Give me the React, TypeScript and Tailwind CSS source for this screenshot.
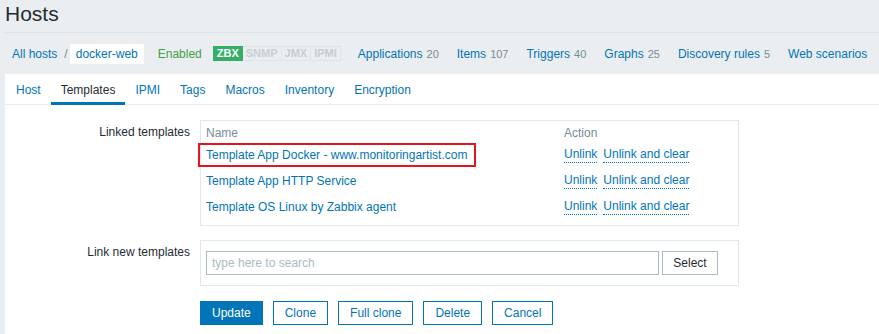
import React from "react";

const navLinks = [
  { label: "Applications", count: "20" },
  { label: "Items", count: "107" },
  { label: "Triggers", count: "40" },
  { label: "Graphs", count: "25" },
  { label: "Discovery rules", count: "5" },
  { label: "Web scenarios", count: "" },
];

const tabs = ["Host", "Templates", "IPMI", "Tags", "Macros", "Inventory", "Encryption"];

const linked = [
  "Template App Docker - www.monitoringartist.com",
  "Template App HTTP Service",
  "Template OS Linux by Zabbix agent",
];

function ActionLinks() {
  return (
    <div className="flex gap-[6px]">
      <span className="border-b border-dotted border-[#0275b8] leading-[15px] text-[#0275b8]">Unlink</span>
      <span className="border-b border-dotted border-[#0275b8] leading-[15px] text-[#0275b8]">Unlink and clear</span>
    </div>
  );
}

export default function App() {
  return (
    <div
      className="h-[334px] w-[879px] overflow-hidden bg-[#ebeef0] text-[12px] text-[#1f2c33]"
      style={{ fontFamily: '"Liberation Sans", Arial, sans-serif' }}
    >
      <div className="pl-[5px]">
        <h1 className="h-[33px] border-b border-[#dfe4e7] pt-[1px] text-[21px] leading-[25px]">Hosts</h1>

        {/* host nav */}
        <div className="flex h-[41px] items-center whitespace-nowrap">
          <span className="ml-[7px] text-[#0275b8]">All hosts</span>
          <span className="ml-[7px] text-[#768d99]">/</span>
          <span className="ml-[2px] flex h-[20px] items-center bg-white px-[6px] text-[#0275b8]">docker-web</span>
          <span className="ml-[14px] text-[#429e47]">Enabled</span>
          <div className="ml-[11px] flex h-[15px] text-[11px] font-bold leading-[13px]">
            <span className="border border-[#34af67] bg-[#34af67] px-[3px] text-white">ZBX</span>
            <span className="border border-l-0 border-[#dfe4e7] px-[3px] text-[#c5ced3]">SNMP</span>
            <span className="border border-l-0 border-[#dfe4e7] px-[3px] text-[#c5ced3]">JMX</span>
            <span className="border border-l-0 border-[#dfe4e7] px-[3px] text-[#c5ced3]">IPMI</span>
          </div>
          <div className="ml-[17px] flex gap-[18px]">
            {navLinks.map((n) => (
              <span key={n.label} className="text-[#0275b8]">
                {n.label}
                {n.count && <span className="ml-[4px] text-[11px] text-[#768d99]">{n.count}</span>}
              </span>
            ))}
          </div>
        </div>

        {/* panel */}
        <div className="h-[300px] bg-white">
          <div className="flex h-[31px] border-b border-[#ebeef0] pl-[1px]">
            {tabs.map((t) => (
              <div
                key={t}
                className={
                  t === "Templates"
                    ? "relative flex items-center px-[10px] pt-[1px] text-[#1f2c33]"
                    : "flex items-center px-[10px] pt-[1px] text-[#0275b8]"
                }
              >
                {t}
                {t === "Templates" && (
                  <span className="absolute -bottom-px left-0 right-0 h-[3px] bg-[#0275b8]" />
                )}
              </div>
            ))}
          </div>

          <div className="pt-[15px]">
            {/* linked templates */}
            <div className="flex">
              <div className="w-[185px] shrink-0 pt-[5px] text-right leading-[14px]">Linked templates</div>
              <div className="ml-[10px] w-[539px] border border-[#e2e7ea] px-[5px] py-[5px]">
                <div className="grid h-[16px] grid-cols-[358px_1fr] leading-[14px] text-[#768d99]">
                  <span>Name</span>
                  <span>Action</span>
                </div>
                {linked.map((name, i) => (
                  <div key={name} className="grid h-[26px] grid-cols-[358px_1fr] items-center">
                    <div>
                      {i === 0 ? (
                        <span className="-ml-[8px] inline-block border-2 border-[#e4151f] py-[3px] pl-[6px] pr-[7px] leading-[14px] text-[#0275b8]">
                          {name}
                        </span>
                      ) : (
                        <span className="text-[#0275b8]">{name}</span>
                      )}
                    </div>
                    <ActionLinks />
                  </div>
                ))}
              </div>
            </div>

            {/* link new templates */}
            <div className="mt-[14px] flex">
              <div className="w-[185px] shrink-0 pt-[5px] text-right leading-[14px]">Link new templates</div>
              <div className="ml-[10px] flex w-[539px] border border-[#e2e7ea] px-[5px] py-[10px]">
                <div className="flex h-[24px] w-[453px] items-center border border-[#acbbc2] px-[5px] text-[#acbbc2]">
                  type here to search
                </div>
                <div className="ml-[3px] flex h-[24px] w-[56px] items-center justify-center border border-[#acbbc2] text-[#1f2c33]">
                  Select
                </div>
              </div>
            </div>

            {/* buttons */}
            <div className="ml-[195px] mt-[15px] flex gap-[10px]">
              <div className="flex h-[24px] items-center bg-[#0275b8] px-[12px] text-white">Update</div>
              {["Clone", "Full clone", "Delete", "Cancel"].map((b) => (
                <div key={b} className="flex h-[24px] items-center border border-[#0275b8] px-[11px] text-[#0275b8]">
                  {b}
                </div>
              ))}
            </div>
          </div>
        </div>
      </div>
    </div>
  );
}
